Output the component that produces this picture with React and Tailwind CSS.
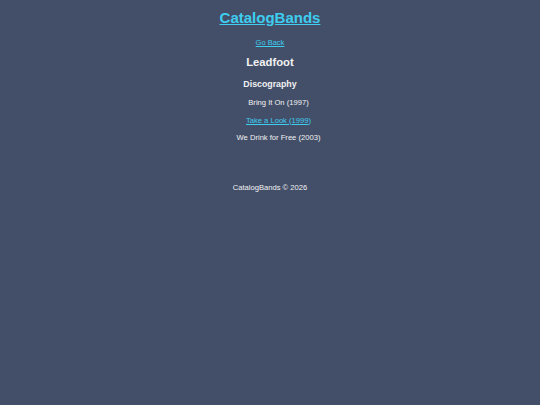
import React from "react";

const albums = [
  { title: "Bring It On", year: 1997, link: false },
  { title: "Take a Look", year: 1999, link: true },
  { title: "We Drink for Free", year: 2003, link: false },
];

const App = () => {
  return (
    <div className="min-h-screen bg-[#434f69] text-[#f2f2f2] font-['Liberation_Sans',Arial,sans-serif] flex flex-col items-center text-center leading-none">
      <header className="mt-[9px] text-[15px] leading-[18px]">
        <a href="#" className="font-bold text-[#3ecdef] underline">
          CatalogBands
        </a>
      </header>
      <nav className="mt-[11px] text-[7.5px] leading-[9px]">
        <a href="#" className="text-[#3ecdef] underline">
          Go Back
        </a>
      </nav>
      <main className="flex flex-col items-center">
        <h2 className="mt-[9px] text-[11.25px] font-bold leading-[13px]">Leadfoot</h2>
        <h3 className="mt-[10px] text-[8.8px] font-bold leading-[11px]">Discography</h3>
        <ul className="mt-[8px] pl-[17px] flex flex-col items-center gap-[8px]">
          {albums.map((a) => (
            <li key={a.title} className="text-[7.6px] leading-[9.5px] font-normal">
              {a.link ? (
                <a href="#" className="text-[#3ecdef] underline">
                  {a.title} ({a.year})
                </a>
              ) : (
                <span>
                  {a.title} ({a.year})
                </span>
              )}
            </li>
          ))}
        </ul>
      </main>
      <footer className="mt-[40px] text-[7.6px] leading-[9.5px]">CatalogBands © 2026</footer>
    </div>
  );
};

export default App;
